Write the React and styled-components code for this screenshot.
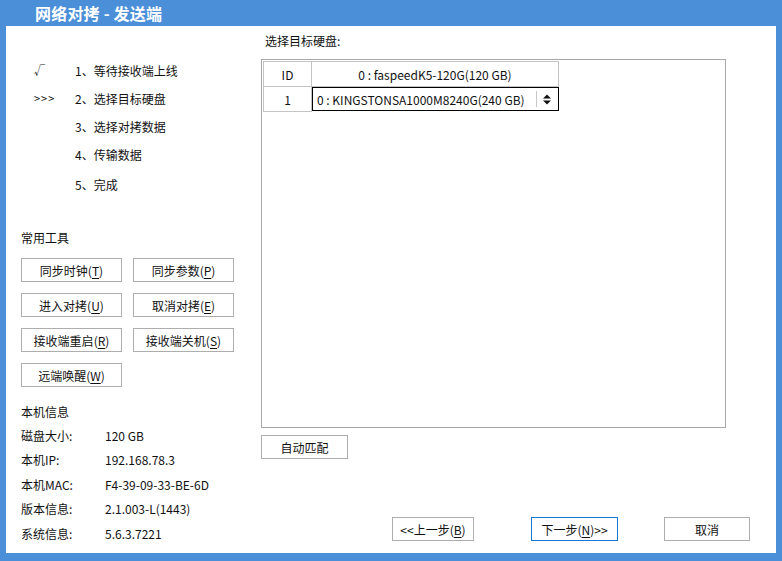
import React from 'react';
import styled, { createGlobalStyle } from 'styled-components';

const GlobalStyle = createGlobalStyle`
  html, body {
    margin: 0;
    padding: 0;
    background: #4a8fd8;
  }
  * {
    box-sizing: border-box;
  }
`;

const steps = [
  { mark: '√', text: '1、等待接收端上线' },
  { mark: '>>>', text: '2、选择目标硬盘' },
  { mark: '', text: '3、选择对拷数据' },
  { mark: '', text: '4、传输数据' },
  { mark: '', text: '5、完成', last: true },
];

const tools = [
  ['同步时钟', 'T'],
  ['同步参数', 'P'],
  ['进入对拷', 'U'],
  ['取消对拷', 'E'],
  ['接收端重启', 'R'],
  ['接收端关机', 'S'],
  ['远端唤醒', 'W'],
];

const info = [
  ['磁盘大小:', '120 GB'],
  ['本机IP:', '192.168.78.3'],
  ['本机MAC:', 'F4-39-09-33-BE-6D'],
  ['版本信息:', '2.1.003-L(1443)'],
  ['系统信息:', '5.6.3.7221'],
];

const App = () => {
  return (
    <>
      <GlobalStyle />
      <Window>
        <TitleBar>
          <TitleText>网络对拷 - 发送端</TitleText>
        </TitleBar>
        <Body>
          <LeftPanel>
            <StepList>
              {steps.map((s) => (
                <StepRow key={s.text} $last={s.last}>
                  <StepMark>{s.mark}</StepMark>
                  <span>{s.text}</span>
                </StepRow>
              ))}
            </StepList>

            <SectionTitle>常用工具</SectionTitle>
            <ToolGrid>
              {tools.map(([label, key]) => (
                <ToolButton key={key}>
                  {label}(<u>{key}</u>)
                </ToolButton>
              ))}
            </ToolGrid>

            <SectionTitle $info>本机信息</SectionTitle>
            {info.map(([k, v]) => (
              <InfoRow key={k}>
                <InfoLabel>{k}</InfoLabel>
                <span>{v}</span>
              </InfoRow>
            ))}
          </LeftPanel>

          <RightPanel>
            <PanelLabel>选择目标硬盘:</PanelLabel>
            <TableBox>
              <DiskTable>
                <colgroup>
                  <col style={{ width: 48 }} />
                  <col style={{ width: 247 }} />
                </colgroup>
                <tbody>
                  <tr>
                    <IdCell>ID</IdCell>
                    <DiskCell>0 : faspeedK5-120G(120 GB)</DiskCell>
                  </tr>
                  <tr>
                    <IdCell>1</IdCell>
                    <SelectCell>
                      <SelectBox>
                        <SelectText>0 : KINGSTONSA1000M8240G(240 GB)</SelectText>
                        <SelectArrow>
                          <svg width="8" height="11" viewBox="0 0 8 11">
                            <path d="M0 4.5 L4 0.5 L8 4.5 Z" fill="#111" />
                            <path d="M0 6.5 L4 10.5 L8 6.5 Z" fill="#111" />
                          </svg>
                        </SelectArrow>
                      </SelectBox>
                    </SelectCell>
                  </tr>
                </tbody>
              </DiskTable>
            </TableBox>
            <Button $width={87}>自动匹配</Button>

            <NavBar>
              <Button $width={82}>
                &lt;&lt;上一步(<u>B</u>)
              </Button>
              <Button $width={87} $primary>
                下一步(<u>N</u>)&gt;&gt;
              </Button>
              <Button $width={86}>取消</Button>
            </NavBar>
          </RightPanel>
        </Body>
      </Window>
    </>
  );
};

export default App;

const Window = styled.div`
  width: 782px;
  height: 561px;
  background: #4a8fd8;
  padding: 0 6px 8px 6px;
  display: flex;
  flex-direction: column;
  font-family: 'Noto Sans CJK SC', 'Noto Sans', sans-serif;
  font-size: 12px;
  color: #111;
`;

const TitleBar = styled.div`
  height: 26px;
  flex: none;
  display: flex;
  align-items: center;
`;

const TitleText = styled.span`
  margin-left: 29px;
  color: #fff;
  font-size: 16px;
  font-weight: bold;
  letter-spacing: 0.2px;
`;

const Body = styled.div`
  flex: 1;
  background: #fff;
  display: flex;
`;

const LeftPanel = styled.div`
  width: 249px;
  flex: none;
  padding: 30px 0 0 15px;
  display: flex;
  flex-direction: column;
`;

const StepList = styled.div`
  display: flex;
  flex-direction: column;
`;

const StepRow = styled.div`
  height: 28px;
  display: flex;
  align-items: center;
  margin-top: ${({ $last }) => ($last ? '2px' : '0')};
`;

const StepMark = styled.span`
  width: 54px;
  padding-left: 13px;
  font-size: 11px;
  letter-spacing: 1px;
`;

const SectionTitle = styled.div`
  height: 24px;
  display: flex;
  align-items: center;
  margin-top: ${({ $info }) => ($info ? '12px' : '27px')};
`;

const ToolGrid = styled.div`
  display: grid;
  grid-template-columns: 101px 101px;
  column-gap: 11px;
  row-gap: 11px;
  margin-top: 9px;
`;

const Button = styled.button`
  width: ${({ $width }) => ($width ? `${$width}px` : 'auto')};
  height: 24px;
  padding: 0;
  background: #fff;
  border: 1px solid ${({ $primary }) => ($primary ? '#1a78d4' : '#adadad')};
  font-family: inherit;
  font-size: 12px;
  color: #111;
  display: flex;
  align-items: center;
  justify-content: center;

  u {
    text-underline-offset: 2px;
  }
`;

const ToolButton = styled(Button)`
  width: 101px;
`;

const InfoRow = styled.div`
  height: 24.5px;
  display: flex;
  align-items: center;
`;

const InfoLabel = styled.span`
  width: 84px;
`;

const RightPanel = styled.div`
  flex: 1;
  padding: 4px 0 12px 6px;
  display: flex;
  flex-direction: column;
`;

const PanelLabel = styled.div`
  height: 20px;
  display: flex;
  align-items: center;
  padding-left: 4px;
`;

const TableBox = styled.div`
  width: 465px;
  height: 369px;
  margin: 9px 0 7px;
  border: 1px solid #a8a8a8;
  padding: 1px;
`;

const DiskTable = styled.table`
  border-collapse: collapse;
  table-layout: fixed;
  width: 296px;
  font-size: 12px;

  td {
    border: 1px solid #c4c4c4;
    padding: 0;
    text-align: center;
  }
`;

const IdCell = styled.td`
  height: 25px;
`;

const DiskCell = styled.td``;

const SelectCell = styled.td`
  height: 24px;
  && {
    border: none;
  }
`;

const SelectBox = styled.div`
  height: 24px;
  border: 1px solid #000;
  display: flex;
  align-items: center;
`;

const SelectText = styled.span`
  flex: 1;
  text-align: left;
  padding-left: 4px;
  white-space: nowrap;
  overflow: hidden;
`;

const SelectArrow = styled.span`
  width: 22px;
  height: 16px;
  border-left: 1px solid #c8c8c8;
  display: flex;
  align-items: center;
  justify-content: center;
`;

const NavBar = styled.div`
  margin-top: auto;
  display: flex;
  padding-left: 131px;
  gap: 57px;

  & > :last-child {
    margin-left: -11px;
  }
`;
